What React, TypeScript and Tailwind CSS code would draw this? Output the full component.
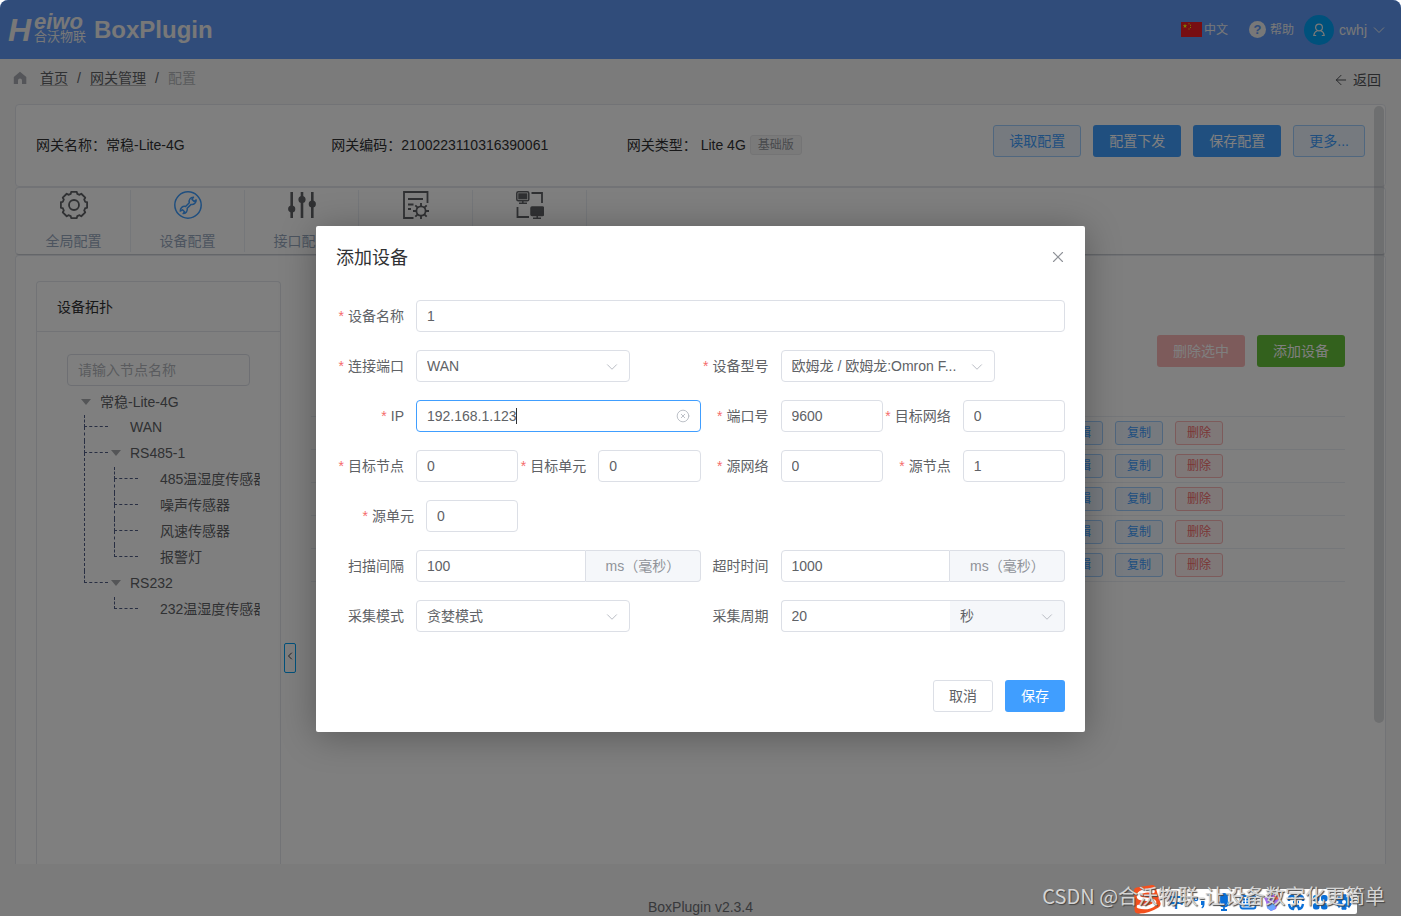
import type { ReactNode } from "react";
import { ArrowLeft, ChevronDown, ChevronLeft, CircleX, X } from "lucide-react";

type TreeNode = { label: string; children?: TreeNode[] };

const topology: TreeNode[] = [
  { label: "WAN" },
  {
    label: "RS485-1",
    children: [
      { label: "485温湿度传感器" },
      { label: "噪声传感器" },
      { label: "风速传感器" },
      { label: "报警灯" },
    ],
  },
  { label: "RS232", children: [{ label: "232温湿度传感器" }] },
];

const deviceRows = [1, 2, 3, 4, 5];

function cogPoints(cx: number, cy: number, teeth: number, outer: number, inner: number) {
  const step = (Math.PI * 2) / teeth;
  const points: string[] = [];
  for (let i = 0; i < teeth; i++) {
    const mid = i * step - Math.PI / 2;
    const corners = [
      [inner, -0.36],
      [outer, -0.27],
      [outer, 0.27],
      [inner, 0.36],
    ];
    for (const [r, t] of corners) {
      const a = mid + t * step;
      points.push(`${(cx + r * Math.cos(a)).toFixed(2)},${(cy + r * Math.sin(a)).toFixed(2)}`);
    }
  }
  return points.join(" ");
}

function GlobalIcon() {
  return (
    <svg viewBox="0 0 28 28" className="size-7" fill="none" stroke="currentColor" strokeWidth="1.8" strokeLinejoin="round">
      <polygon points={cogPoints(14, 14, 8, 13.4, 11.6)} />
      <circle cx="14" cy="14" r="5" />
    </svg>
  );
}

function DeviceIcon() {
  return (
    <svg viewBox="0 0 28 28" className="size-7" fill="none" stroke="currentColor" strokeWidth="1.5" strokeLinejoin="round" strokeLinecap="round">
      <circle cx="14" cy="14" r="13.2" />
      <path d="M19.5 6.2a4.3 4.3 0 0 0-4.2 5.6l-3.7 3.7a4.3 4.3 0 0 0-5.3 4.6l2.2-1.3 2 2-1.4 1.8a4.3 4.3 0 0 0 4.1-5.3l3.9-3.9a4.3 4.3 0 0 0 5.1-4.5l-2.1 1.5-2.1-2z" />
    </svg>
  );
}

function PortIcon() {
  return (
    <svg viewBox="0 0 28 28" className="size-7" fill="currentColor" stroke="currentColor" strokeWidth="2.6">
      <path d="M3.7 1v26M14 1v26M24.3 1v26" />
      <circle cx="3.7" cy="18" r="2.3" />
      <circle cx="14" cy="8.5" r="2.3" />
      <circle cx="24.3" cy="13" r="2.3" />
    </svg>
  );
}

function TaskIcon() {
  return (
    <svg viewBox="0 0 28 28" className="size-7" fill="none" stroke="currentColor" strokeWidth="1.8">
      <path d="M11.5 27H2V1h23.500v11M6 8h15M6 13.500h5.500M6 18h3" />
      <circle cx="19" cy="20" r="4.6" />
      <path d="M19 12v3.400M19 24.600V28M11 20h3.400M23.600 20H27M13.300 14.300l2.400 2.400M22.300 23.300l2.400 2.400M13.300 25.700l2.400-2.400M22.300 16.700l2.400-2.400" />
    </svg>
  );
}

function NetworkIcon() {
  return (
    <svg viewBox="0 0 28 28" className="size-7" fill="none" stroke="currentColor" strokeWidth="1.5">
      <rect x="0.8" y="0.8" width="12" height="9" rx="1.5" />
      <rect x="3" y="3" width="7.6" height="4.6" fill="currentColor" />
      <path d="M3 12.200h8M6.800 10v2" />
      <path d="M15.500 2H26v10M1.500 16v10H13" strokeWidth="1.8" />
      <rect x="15" y="16" width="12.5" height="8.5" rx="1" fill="currentColor" />
      <path d="M17 27.200h8M21.200 25v2" />
    </svg>
  );
}

const tabs = [
  { label: "全局配置", icon: <GlobalIcon /> },
  { label: "设备配置", icon: <DeviceIcon />, active: true },
  { label: "接口配置", icon: <PortIcon /> },
  { label: "任务配置", icon: <TaskIcon /> },
  { label: "网络配置", icon: <NetworkIcon /> },
];

function Header() {
  return (
    <header className="flex h-[59px] shrink-0 items-center justify-between bg-[#6099f5] pr-[15px] pl-2 text-[#f0f0f0]">
      <div className="flex items-center">
        <span className="w-[25px] text-[32px] leading-8 font-bold italic">H</span>
        <div className="flex w-[61px] flex-col pl-px">
          <span className="text-[22px] leading-[14px] font-bold italic">eiwo</span>
          <span className="text-[13px] leading-4 whitespace-nowrap">合沃物联</span>
        </div>
        <h1 className="text-2xl font-bold">BoxPlugin</h1>
      </div>
      <div className="flex items-center text-xs">
        <button className="flex items-center gap-0.5">
          <svg viewBox="0 0 21 15" className="h-[15px] w-[21px]">
            <rect width="21" height="15" fill="#ee1c25" />
            <path d="M4 1.800l.6 1.500h1.600l-1.300 1 .5 1.600L4 5 2.600 5.900l.5-1.600-1.300-1h1.600z" fill="#ff0" />
            <path d="M7.500 1.200h1v1h-1zM9 2.800h1v1H9zM9 5h1v1H9zM7.500 6.500h1v1h-1z" fill="#ff0" />
          </svg>
          中文
        </button>
        <button className="ml-[21px] flex items-center gap-1">
          <span className="flex size-[17px] items-center justify-center rounded-full bg-[#f0f0f0] text-[13px] font-bold text-[#6099f5]">?</span>
          帮助
        </button>
        <button className="ml-2.5 flex items-center gap-[5px] text-sm">
          <span className="flex size-[30px] items-center justify-center rounded-full bg-[#00a2f8]">
            <svg viewBox="0 0 12 14" className="h-3.5 w-3" fill="none" stroke="currentColor" strokeWidth="1.2">
              <circle cx="6" cy="4.5" r="3.4" />
              <path d="M4.300 7.700C2 8.500 1 10 .8 12.500h2.400M7.700 7.700c2.300.8 3.300 2.300 3.500 4.800H8.800" />
            </svg>
          </span>
          cwhj
          <svg viewBox="0 0 14 14" className="size-3.5" fill="none" stroke="currentColor">
            <path d="M2 4.500l5 5 5-5" />
          </svg>
        </button>
      </div>
    </header>
  );
}

function Breadcrumb() {
  return (
    <div className="flex h-[45px] shrink-0 items-center justify-between pr-5 pb-1 pl-[13px] text-sm">
      <nav className="flex items-center pb-1 text-[#606266]">
        <svg viewBox="0 0 14 14" className="mr-[13px] size-3.5" fill="#a8abb2">
          <path d="M7 .8L13.300 6v7H9V9.500a2 2 0 0 0-4 0V13H.8V6z" />
        </svg>
        <a href="#home" className="underline decoration-[#b4b4b4] underline-offset-2">首页</a>
        <span className="w-[22px] text-center">/</span>
        <a href="#gateway" className="underline decoration-[#b4b4b4] underline-offset-2">网关管理</a>
        <span className="w-[22px] text-center">/</span>
        <span className="text-[#b4b6ba]">配置</span>
      </nav>
      <a href="#back" className="flex items-center gap-1 text-[#505256]">
        <ArrowLeft className="size-4" strokeWidth={1.5} />
        返回
      </a>
    </div>
  );
}

const plainButton = "h-8 rounded-[3px] border border-[#a0cfff] bg-[#ecf5ff] px-[15px] text-sm text-[#409eff]";
const solidButton = "h-8 rounded-[3px] bg-[#409eff] px-4 text-sm text-white";

function GatewayCard() {
  return (
    <section className="flex h-[83px] shrink-0 items-start rounded border border-[#e4e7ed] bg-white p-5">
      <dl className="grid w-2/3 grid-cols-3 text-sm leading-10 whitespace-nowrap text-[#303133]">
        <div className="flex">
          <dt>网关名称：</dt>
          <dd>常稳-Lite-4G</dd>
        </div>
        <div className="flex">
          <dt>网关编码：</dt>
          <dd>2100223110316390061</dd>
        </div>
        <div className="flex items-center">
          <dt>网关类型：</dt>
          <dd className="flex items-center gap-1 pl-1">
            Lite 4G
            <span className="rounded-[3px] border border-[#e9e9eb] bg-[#f4f4f5] px-[7px] text-xs leading-[18px] text-[#909399]">基础版</span>
          </dd>
        </div>
      </dl>
      <div className="flex grow justify-end gap-3">
        <button className={plainButton}>读取配置</button>
        <button className={solidButton}>配置下发</button>
        <button className={solidButton}>保存配置</button>
        <button className={plainButton}>更多...</button>
      </div>
    </section>
  );
}

function Caret() {
  return <span className="border-x-5 border-t-6 border-x-transparent border-t-[#a9abaf]" />;
}

function TreeItem({ node, last }: { node: TreeNode; last: boolean }) {
  return (
    <li className="relative">
      <span className="absolute top-0 left-0 h-3 w-6 border-b border-l border-dashed border-[#525e86]" />
      {!last && <span className="absolute top-3 bottom-0 left-0 border-l border-dashed border-[#525e86]" />}
      <div className="flex h-[26px] items-center pb-0.5">
        <span className="flex w-[46px] shrink-0 pl-[27px]">{node.children && <Caret />}</span>
        <span className="whitespace-nowrap">{node.label}</span>
      </div>
      {node.children && (
        <ul className="ml-[30px]">
          {node.children.map((child, i) => (
            <TreeItem key={child.label} node={child} last={i === node.children!.length - 1} />
          ))}
        </ul>
      )}
    </li>
  );
}

function TopologyPanel() {
  return (
    <aside className="w-[245px] shrink-0 rounded-t border border-b-0 border-[#e4e7ed] bg-white">
      <h2 className="h-[50px] border-b border-[#e4e7ed] px-5 text-sm leading-[50px] text-[#303133]">设备拓扑</h2>
      <div className="px-[30px] pt-[22px]">
        <input
          aria-label="请输入节点名称"
          placeholder="请输入节点名称"
          className="h-8 w-full rounded border border-[#dcdfe6] bg-white px-2.5 text-sm placeholder:text-[#b4b7bd]"
        />
      </div>
      <div className="mt-[3px] mr-5 overflow-hidden pl-[47px] text-sm text-[#606266]">
        <div className="-ml-[3px] flex h-[26px] items-center gap-[9px]">
          <Caret />
          常稳-Lite-4G
        </div>
        <ul>
          {topology.map((node, i) => (
            <TreeItem key={node.label} node={node} last={i === topology.length - 1} />
          ))}
        </ul>
      </div>
    </aside>
  );
}

function DeviceTable() {
  return (
    <section className="ml-[15px] grow">
      <div className="mt-[54px] flex justify-end gap-3">
        <button disabled className="h-8 rounded-[3px] bg-[#fab6b6] px-4 text-sm text-white">删除选中</button>
        <button className="h-8 rounded-[3px] bg-[#67c23a] px-4 text-sm text-white">添加设备</button>
      </div>
      <table className="mt-[49px] w-full border-t border-[#ebeef5]">
        <tbody>
          {deviceRows.map((row) => (
            <tr key={row} className="h-[33px] border-b border-[#ebeef5]">
              <td />
              <td className="w-[290px] p-0">
                <div className="flex gap-3 text-xs">
                  <button className="h-6 w-12 rounded-[3px] border border-[#a0cfff] bg-[#ecf5ff] text-[#409eff]">编辑</button>
                  <button className="h-6 w-12 rounded-[3px] border border-[#a0cfff] bg-[#ecf5ff] text-[#409eff]">复制</button>
                  <button className="h-6 w-12 rounded-[3px] border border-[#fab6b6] bg-[#fef0f0] text-[#f56c6c]">删除</button>
                </div>
              </td>
            </tr>
          ))}
        </tbody>
      </table>
    </section>
  );
}

type FieldProps = {
  id: string;
  label: string;
  required?: boolean;
  className?: string;
  labelClass?: string;
  children: ReactNode;
};

function Field({ id, label, required, className = "", labelClass = "w-20", children }: FieldProps) {
  return (
    <div className={`flex ${className}`}>
      <label htmlFor={id} className={`shrink-0 pr-3 text-right leading-8 whitespace-nowrap ${labelClass}`}>
        {required && <span className="mr-1 text-[#f56c6c]">*</span>}
        {label}
      </label>
      {children}
    </div>
  );
}

const inputBox = "h-8 w-full min-w-0 rounded border border-[#dcdfe6] bg-white px-2.5 outline-none";

function SelectArrow() {
  return <ChevronDown className="pointer-events-none absolute top-2 right-[9px] size-[18px] text-[#b8bbc2]" strokeWidth={1.3} />;
}

function SelectBox({ id, value }: { id: string; value: string }) {
  return (
    <div className="relative w-[214px]">
      <select id={id} className="h-8 w-full appearance-none rounded border border-[#dcdfe6] bg-white pr-8 pl-2.5">
        <option>{value}</option>
      </select>
      <SelectArrow />
    </div>
  );
}

function IntervalInput({ id, value }: { id: string; value: string }) {
  return (
    <div className="flex grow">
      <input id={id} defaultValue={value} className="h-8 w-0 grow rounded-l border border-[#dcdfe6] px-2.5 outline-none" />
      <span className="w-[115px] rounded-r border border-l-0 border-[#dcdfe6] bg-[#f5f7fa] pl-5 leading-[30px] whitespace-nowrap text-[#909399]">
        ms（毫秒）
      </span>
    </div>
  );
}

function AddDeviceDialog() {
  return (
    <div
      role="dialog"
      aria-label="添加设备"
      className="w-full max-w-[769px] rounded-xs bg-white p-5 text-sm text-[#606266] shadow-[0_4px_36px_rgba(0,0,0,0.3)]"
    >
      <div className="flex items-start justify-between">
        <h2 className="text-lg leading-6 text-[#303133]">添加设备</h2>
        <button aria-label="关闭" className="pt-0.5 text-[#909399]">
          <X className="-mr-0.5 size-[18px]" strokeWidth={1.5} />
        </button>
      </div>
      <form className="mt-[30px] grid grid-cols-4 gap-y-[18px]">
        <Field id="name" label="设备名称" required className="col-span-4">
          <input id="name" defaultValue="1" className={inputBox} />
        </Field>
        <Field id="port" label="连接端口" required className="col-span-2">
          <SelectBox id="port" value="WAN" />
        </Field>
        <Field id="model" label="设备型号" required className="col-span-2">
          <SelectBox id="model" value="欧姆龙 / 欧姆龙:Omron F..." />
        </Field>
        <Field id="ip" label="IP" required className="col-span-2">
          <div className="relative grow">
            <input
              id="ip"
              defaultValue="192.168.1.123"
              className="h-8 w-full rounded border border-[#409eff] bg-white px-2.5 outline-none"
            />
            <span className="absolute top-2 left-[100px] h-4 w-px bg-[#303133]" />
            <CircleX className="absolute top-[9px] right-[11px] size-3.5 text-[#b4b8c0]" strokeWidth={1.5} />
          </div>
        </Field>
        <Field id="portNo" label="端口号" required>
          <input id="portNo" defaultValue="9600" className={inputBox} />
        </Field>
        <Field id="dstNet" label="目标网络" required>
          <input id="dstNet" defaultValue="0" className={inputBox} />
        </Field>
        <Field id="dstNode" label="目标节点" required>
          <input id="dstNode" defaultValue="0" className={inputBox} />
        </Field>
        <Field id="dstUnit" label="目标单元" required>
          <input id="dstUnit" defaultValue="0" className={inputBox} />
        </Field>
        <Field id="srcNet" label="源网络" required>
          <input id="srcNet" defaultValue="0" className={inputBox} />
        </Field>
        <Field id="srcNode" label="源节点" required>
          <input id="srcNode" defaultValue="1" className={inputBox} />
        </Field>
        <Field id="srcUnit" label="源单元" required labelClass="w-[90px]">
          <input id="srcUnit" defaultValue="0" className={inputBox} />
        </Field>
        <Field id="scan" label="扫描间隔" className="col-span-2 col-start-1">
          <IntervalInput id="scan" value="100" />
        </Field>
        <Field id="timeout" label="超时时间" className="col-span-2">
          <IntervalInput id="timeout" value="1000" />
        </Field>
        <Field id="mode" label="采集模式" className="col-span-2">
          <SelectBox id="mode" value="贪婪模式" />
        </Field>
        <Field id="period" label="采集周期" className="col-span-2">
          <div className="flex grow">
            <input id="period" defaultValue="20" className="h-8 w-0 grow rounded-l border border-r-0 border-[#dcdfe6] px-2.5 outline-none" />
            <div className="relative w-[115px]">
              <select
                aria-label="周期单位"
                className="h-8 w-full appearance-none rounded-r border border-l-0 border-[#dcdfe6] bg-[#f5f7fa] pr-8 pl-2.5"
              >
                <option>秒</option>
              </select>
              <SelectArrow />
            </div>
          </div>
        </Field>
      </form>
      <div className="mt-12 flex justify-end gap-3">
        <button className="h-8 rounded-[3px] border border-[#dcdfe6] px-[15px]">取消</button>
        <button className={solidButton}>保存</button>
      </div>
    </div>
  );
}

function ImeBar() {
  return (
    <div className="absolute right-11 bottom-0.5 flex h-[25px] items-center rounded-xs bg-white pr-1 text-[#0a6fd8]">
      <svg viewBox="0 0 28 30" className="-ml-1.5 h-[30px] w-7 self-end">
        <path d="M1 6.500Q1 4 3.500 3.500L19 1q3-.4 3.600 2.500L27.500 19q.6 3-2 4.500Q15 30 5 29.500q-3 0-3.400-3z" fill="#f4511e" />
        <path d="M20 7.500C13 5.500 5 8 5.500 12.500 6 17 20 13.500 21.500 18c.8 4-8 7-16 4.500" fill="none" stroke="#fff" strokeWidth="3.6" strokeLinecap="round" />
      </svg>
      <div className="flex items-center gap-1.5 pl-1.5">
        <span className="w-[18px] text-center text-base leading-6 font-bold">中</span>
        <svg viewBox="0 0 18 18" className="size-[18px]" fill="currentColor">
          <circle cx="5" cy="6" r="1.7" fill="none" stroke="currentColor" strokeWidth="1.2" />
          <path d="M10 8h3.500v3.500q0 3-2.500 4l-.6-1q1.200-.8 1.200-2.500H10z" />
        </svg>
        <svg viewBox="0 0 18 18" className="size-[18px]" fill="none" stroke="currentColor" strokeWidth="1.8">
          <rect x="6" y="1" width="6" height="10.5" rx="3" fill="currentColor" />
          <path d="M3.500 8.500a5.500 5 0 0 0 11 0M9 14v3M6 17h6" />
        </svg>
        <svg viewBox="0 0 18 18" className="size-[18px]" fill="none" stroke="currentColor" strokeWidth="1.8">
          <rect x="1.5" y="3" width="15" height="12.5" rx="2" />
          <path d="M4 6.500h10M4 9.300h10" strokeDasharray="2 1.200" />
          <path d="M5.500 12.500h7" />
        </svg>
        <svg viewBox="0 0 18 18" className="size-[18px]">
          <path d="M1 5l8-3 8-2-1 8-3 8-5 2-4-3-1-6z" fill="#a56bf0" />
          <path d="M11 2l6-2-1 6-4 1z" fill="#f4623a" />
          <path d="M4 11l9 0-1 5-4 2-4-3z" fill="#6aa5ff" />
        </svg>
        <svg viewBox="0 0 18 18" className="size-[18px]" fill="none" stroke="currentColor" strokeWidth="2.4">
          <path d="M2 8V6q0-3 3-3h1l2 2h2l2-2h1q3 0 3 3v2M2 11q1 5 4 5l1-3h4l1 3q3 0 4-5M6 9h1M11 9h1" />
        </svg>
        <svg viewBox="0 0 18 18" className="size-[18px]" fill="currentColor">
          <rect x="2" y="2" width="6.5" height="6.5" rx="2.5" />
          <rect x="10" y="2" width="6.5" height="6.5" rx="2.5" />
          <rect x="2" y="10" width="6.5" height="6.5" rx="2.5" />
          <rect x="10" y="10" width="6.5" height="6.5" rx="2.5" />
        </svg>
        <svg viewBox="0 0 18 18" className="size-[18px]" fill="none" stroke="currentColor" strokeWidth="1">
          <polygon points={cogPoints(9, 9, 6, 7.5, 5)} fill="currentColor" />
          <circle cx="9" cy="9" r="2" fill="#fff" stroke="none" />
        </svg>
      </div>
    </div>
  );
}

export default function App() {
  return (
    <div className="bg-white pr-px font-['Liberation_Sans','Noto_Sans_CJK_SC',sans-serif]">
      <div className="relative flex h-screen flex-col overflow-hidden rounded-t-lg bg-[#f6f6f6]">
        <Header />
        <Breadcrumb />
        <main className="relative mx-[15px] flex min-h-0 grow flex-col overflow-hidden">
          <GatewayCard />
          <nav className="flex h-[68px] shrink-0 rounded border border-[#e4e7ed] border-b-[#c9ccd3] bg-white pl-px">
            {tabs.map((tab) => (
              <button key={tab.label} className="my-0.5 flex w-[114px] flex-col items-center border-r border-[#ebeef5] pt-px text-sm text-[#99a9bf]">
                <span className={tab.active ? "text-[#409eff]" : "text-[#606266]"}>{tab.icon}</span>
                <span className="mt-3">{tab.label}</span>
              </button>
            ))}
          </nav>
          <section className="flex grow rounded-t border border-b-0 border-[#e4e7ed] bg-white pt-[25px] pr-10 pl-5">
            <TopologyPanel />
            <button
              aria-label="收起"
              className="mt-[362px] ml-[3px] flex h-[30px] w-3 shrink-0 items-center justify-center rounded-xs border border-[#00a2f8] pb-1 text-[#404245]"
            >
              <ChevronLeft className="size-3 shrink-0" strokeWidth={2} />
            </button>
            <DeviceTable />
          </section>
          <div className="absolute top-0.5 right-0.5 h-[617px] w-2.5 rounded-full bg-[#909399]/30" />
        </main>
        <footer className="flex h-[52px] shrink-0 items-end justify-center text-sm leading-[18px] text-[#707276]">BoxPlugin v2.3.4</footer>

        <div className="absolute inset-0 flex items-start justify-center bg-black/50 pt-[226px]">
          <AddDeviceDialog />
        </div>

        <ImeBar />
        <p className="absolute right-4 bottom-1 font-['Noto_Sans_CJK_SC',sans-serif] text-xl leading-8 whitespace-nowrap text-[#d4d4d4] [text-shadow:1px_1px_1px_#444]">
          CSDN @合沃物联-让设备数字化更简单
        </p>
      </div>
    </div>
  );
}
